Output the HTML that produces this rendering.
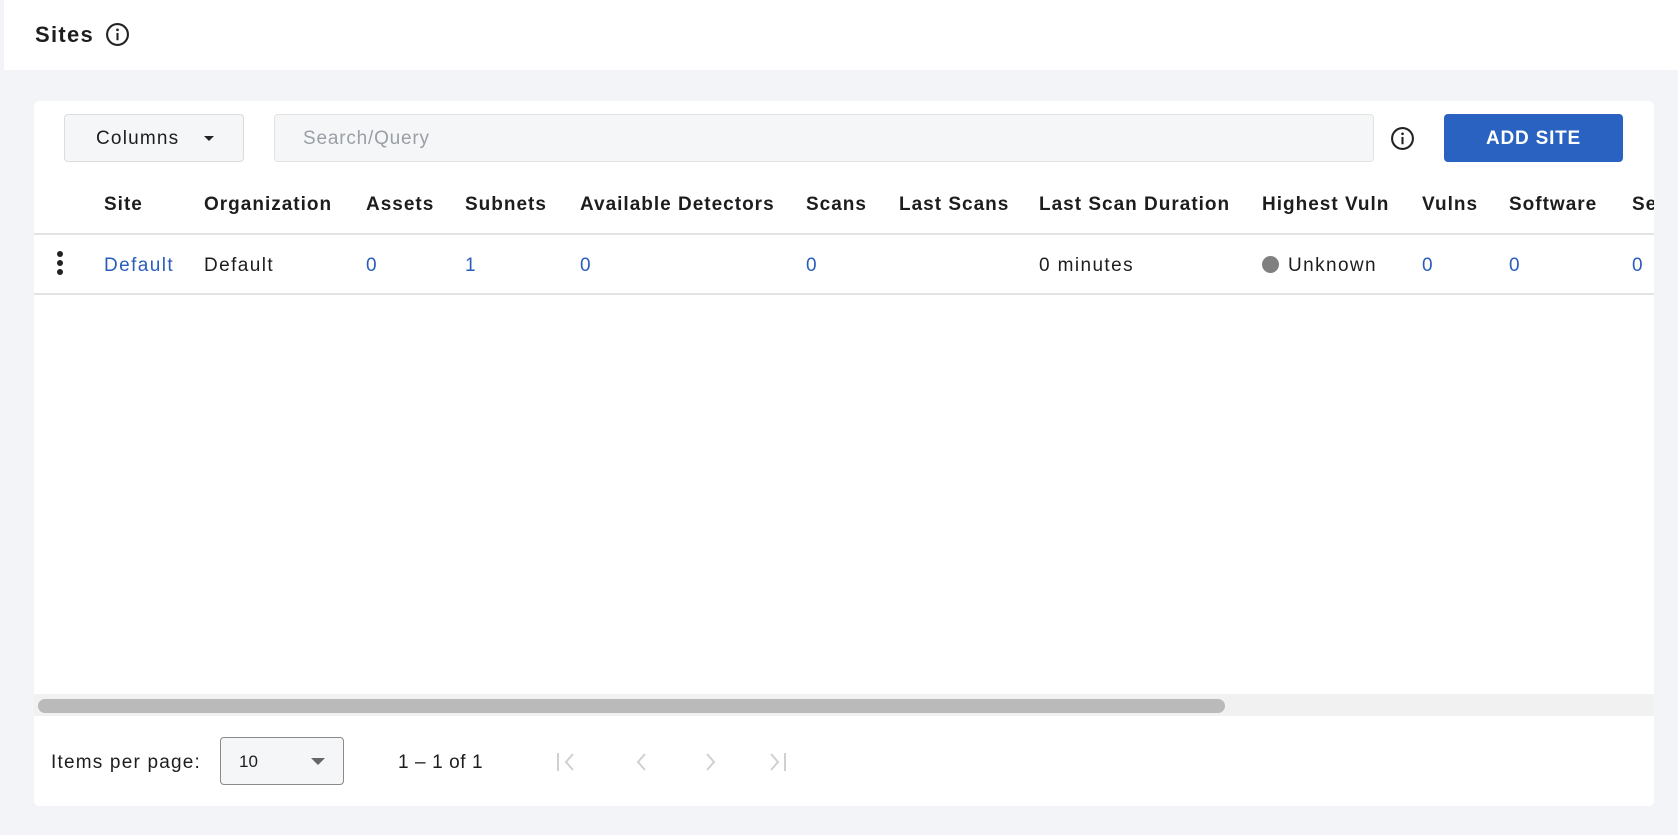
<!DOCTYPE html>
<html><head><meta charset="utf-8"><style>
*{box-sizing:border-box;margin:0;padding:0}
body{width:1678px;height:835px;background:#f3f4f8;font-family:"Liberation Sans",sans-serif;color:#1d1d1f;position:relative;overflow:hidden}
.hdr{position:absolute;left:4px;top:0;right:0;height:70px;background:#fff}
.abs{position:absolute}
.card{position:absolute;left:34px;top:101px;width:1620px;height:705px;background:#fff;border-radius:5px;overflow:hidden}
.th{position:absolute;top:194px;font-size:19px;font-weight:bold;white-space:nowrap;letter-spacing:1px}
.td{position:absolute;top:255px;font-size:19px;white-space:nowrap;letter-spacing:1.4px}
.b{color:#2a5dbd}
</style></head><body>
<div class="hdr"></div>
<div class="abs" style="left:35px;top:22px;font-size:22px;font-weight:bold;letter-spacing:1.3px">Sites</div>
<svg class="abs" style="left:105px;top:22px" width="25" height="25" viewBox="0 0 24 24"><circle cx="12" cy="12" r="10" fill="none" stroke="#222" stroke-width="2"/><circle cx="12" cy="7.5" r="1.3" fill="#222"/><rect x="11" y="10.5" width="2" height="7" fill="#222"/></svg>
<div class="card"></div>
<div class="abs" style="left:64px;top:114px;width:180px;height:48px;background:#f5f6f7;border:1px solid #dcdcdc;border-radius:4px;font-size:19px;line-height:48px;padding-left:31px;letter-spacing:1.2px">Columns<span style="position:absolute;left:139px;top:21px;border-left:5px solid transparent;border-right:5px solid transparent;border-top:5px solid #222"></span></div>
<div class="abs" style="left:274px;top:114px;width:1100px;height:48px;background:#f5f6f7;border:1px solid #e2e2e2;border-radius:4px;font-size:19px;line-height:48px;padding-left:28px;color:#9a9ea5;letter-spacing:0.8px">Search/Query</div>
<svg class="abs" style="left:1390px;top:126px" width="25" height="25" viewBox="0 0 24 24"><circle cx="12" cy="12" r="10" fill="none" stroke="#222" stroke-width="2"/><circle cx="12" cy="7.5" r="1.3" fill="#222"/><rect x="11" y="10.5" width="2" height="7" fill="#222"/></svg>
<div class="abs" style="left:1444px;top:114px;width:179px;height:48px;background:#2962c0;border-radius:4px;color:#fff;font-size:19px;font-weight:bold;text-align:center;line-height:50px;letter-spacing:0.8px">ADD SITE</div>
<div class="th" style="left:104px">Site</div>
<div class="th" style="left:204px">Organization</div>
<div class="th" style="left:366px">Assets</div>
<div class="th" style="left:465px">Subnets</div>
<div class="th" style="left:580px">Available Detectors</div>
<div class="th" style="left:806px">Scans</div>
<div class="th" style="left:899px">Last Scans</div>
<div class="th" style="left:1039px">Last Scan Duration</div>
<div class="th" style="left:1262px">Highest Vuln</div>
<div class="th" style="left:1422px">Vulns</div>
<div class="th" style="left:1509px">Software</div>
<div class="th" style="left:1632px;width:22px;overflow:hidden">Services</div>
<div class="abs" style="left:34px;top:233px;width:1620px;height:2px;background:#e4e4e6"></div>
<div class="abs" style="left:34px;top:293px;width:1620px;height:2px;background:#e4e4e6"></div>
<div class="abs" style="left:57px;top:251px;width:6px;height:6px;border-radius:50%;background:#222;box-shadow:0 9px 0 #222,0 18px 0 #222"></div>
<div class="td b" style="left:104px">Default</div>
<div class="td" style="left:204px">Default</div>
<div class="td b" style="left:366px">0</div>
<div class="td b" style="left:465px">1</div>
<div class="td b" style="left:580px">0</div>
<div class="td b" style="left:806px">0</div>
<div class="td" style="left:1039px">0 minutes</div>
<div class="abs" style="left:1262px;top:256px;width:17px;height:17px;border-radius:50%;background:#808080"></div>
<div class="td" style="left:1288px">Unknown</div>
<div class="td b" style="left:1422px">0</div>
<div class="td b" style="left:1509px">0</div>
<div class="td b" style="left:1632px">0</div>
<div class="abs" style="left:34px;top:694px;width:1620px;height:22px;background:#f1f1f1"></div>
<div class="abs" style="left:38px;top:699px;width:1187px;height:14px;background:#bababa;border-radius:7px"></div>
<div class="abs" style="left:51px;top:752px;font-size:19px;letter-spacing:1.2px">Items per page:</div>
<div class="abs" style="left:220px;top:737px;width:124px;height:48px;border:1px solid #8a8a8a;border-radius:4px;background:#f5f6f7;font-size:17px;line-height:48px;padding-left:18px">10<span style="position:absolute;left:90px;top:20px;border-left:7px solid transparent;border-right:7px solid transparent;border-top:7px solid #666"></span></div>
<div class="abs" style="left:398px;top:752px;font-size:19px;letter-spacing:0.6px">1 – 1 of 1</div>
<svg class="abs" style="left:555px;top:750px" width="240" height="24" viewBox="0 0 240 24" fill="none" stroke="#d0d0d0" stroke-width="2"><path d="M3 3v18M18 4l-7 8 7 8"/><path d="M90 4l-7 8 7 8"/><path d="M152 4l7 8-7 8"/><path d="M216 4l7 8-7 8M230 3v18"/></svg>
</body></html>
